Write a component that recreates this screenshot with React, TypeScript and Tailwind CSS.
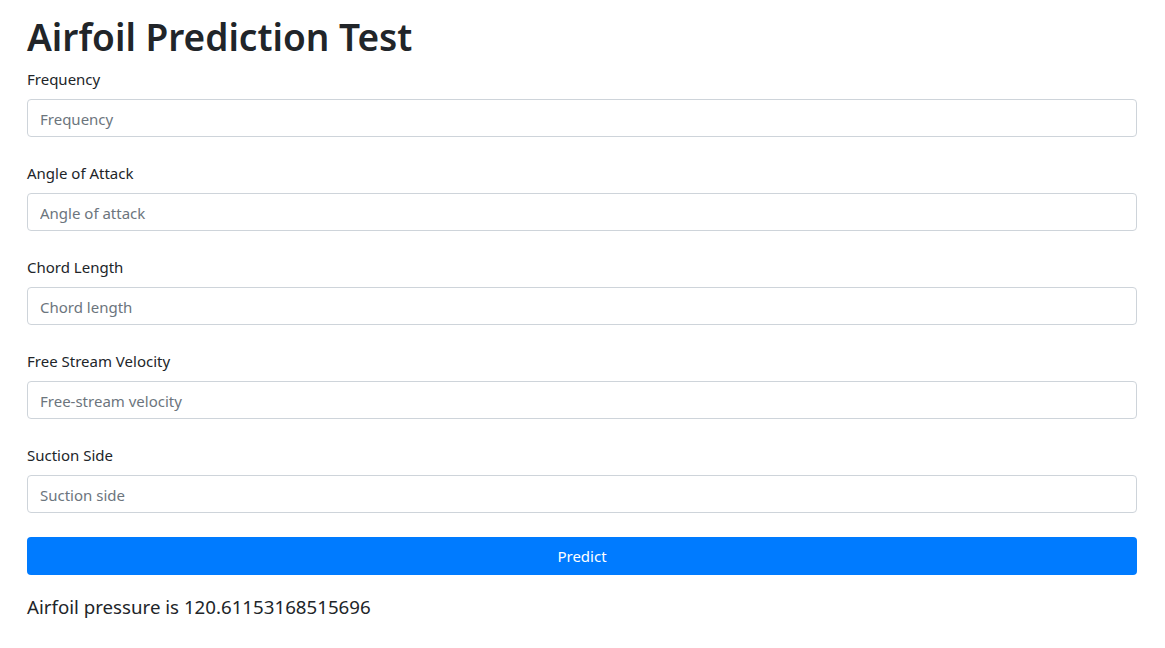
import React from 'react';

const fields = [
  { label: 'Frequency', placeholder: 'Frequency' },
  { label: 'Angle of Attack', placeholder: 'Angle of attack' },
  { label: 'Chord Length', placeholder: 'Chord length' },
  { label: 'Free Stream Velocity', placeholder: 'Free-stream velocity' },
  { label: 'Suction Side', placeholder: 'Suction side' },
];

const App = () => {
  return (
    <div className="min-h-screen bg-white px-[27px] pt-[13px] text-[#212529] font-['Noto_Sans',sans-serif]">
      <h1 className="mb-[6px] text-[37px] font-semibold leading-[48px]">Airfoil Prediction Test</h1>
      <form className="w-[1110px]" onSubmit={(e) => e.preventDefault()}>
        {fields.map((f, i) => (
          <div key={i} className="mb-6">
            <label className="mb-2 block text-[15px] leading-6">{f.label}</label>
            <input
              placeholder={f.placeholder}
              className="block h-[38px] w-full rounded border border-[#ced4da] px-3 pt-px text-[15px] placeholder:text-[#6c757d] outline-none"
            />
          </div>
        ))}
        <button className="h-[38px] w-full rounded bg-[#007bff] text-[15px] text-white">Predict</button>
      </form>
      <p className="mt-5 text-[18.7px] leading-6">Airfoil pressure is 120.61153168515696</p>
    </div>
  );
};

export default App;
